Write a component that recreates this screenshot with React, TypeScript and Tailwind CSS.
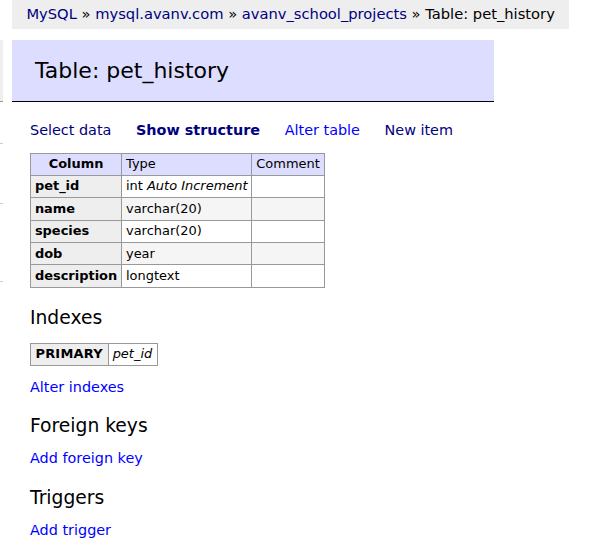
import React from "react";

const rows: { name: string; type: React.ReactNode }[] = [
  { name: "pet_id", type: <>int <i>Auto Increment</i></> },
  { name: "name", type: "varchar(20)" },
  { name: "species", type: "varchar(20)" },
  { name: "dob", type: "year" },
  { name: "description", type: "longtext" },
];

export default function App() {
  return (
    <div
      className="relative w-[598px] h-[559px] overflow-hidden bg-white text-black text-[14.4px] leading-[1.25]"
      style={{ fontFamily: '"DejaVu Sans", Verdana, sans-serif' }}
    >
      {/* hidden menu remnants on the left edge */}
      <div className="absolute left-0 top-[40px] w-[3px] h-[62px] bg-[#eee] border-b border-[#999]" />
      <div className="absolute left-0 top-[143px] w-[3px] h-px bg-[#ccc]" />
      <div className="absolute left-0 top-[203px] w-[3px] h-px bg-[#ccc]" />
      <div className="absolute left-0 top-[281px] w-[3px] h-px bg-[#ccc]" />

      {/* breadcrumb */}
      <div className="ml-[12px] w-fit h-[29px] leading-[28px] px-[14.4px] bg-[#eee] whitespace-nowrap text-[14.7px]">
        <a className="text-[#000080]">MySQL</a> » <a className="text-[#000080]">mysql.avanv.com</a> »{" "}
        <a className="text-[#000080]">avanv_school_projects</a> » Table: pet_history
      </div>

      {/* content */}
      <div className="pl-[30px] pt-[11px]">
        <h2 className="w-[482px] ml-[-18px] mb-[19px] pl-[23px] pr-[21.6px] pt-[17px] pb-[16px] text-[22px] leading-[1.25] font-normal bg-[#ddf] border-b border-black">
          Table: pet_history
        </h2>

        <p className="whitespace-nowrap">
          <a className="text-[#000080] mr-[20px]">Select data</a>{" "}
          <a className="text-[#000080] mr-[20px] font-bold">Show structure</a>{" "}
          <a className="text-[#0000ff] mr-[20px]">Alter table</a>{" "}
          <a className="text-[#000080] mr-[20px]">New item</a>
        </p>

        <table className="mt-[14px] border-collapse text-[12.96px] leading-[1.25]">
          <thead>
            <tr className="bg-[#ddf]">
              <th className="border border-[#999] px-[6.5px] py-[2.6px] text-center font-bold">Column</th>
              <td className="border border-[#999] px-[3.9px] py-[2.6px]">Type</td>
              <td className="border border-[#999] px-[3.9px] py-[2.6px]">Comment</td>
            </tr>
          </thead>
          <tbody>
            {rows.map((r, i) => (
              <tr key={r.name} className={i % 2 === 1 ? "bg-[#f5f5f5]" : "bg-white"}>
                <th className="border border-[#999] px-[3.9px] py-[2.6px] text-left font-bold bg-[#eee]">{r.name}</th>
                <td className="border border-[#999] px-[3.9px] py-[2.6px] whitespace-nowrap">{r.type}</td>
                <td className="border border-[#999] px-[3.9px] py-[2.6px]"></td>
              </tr>
            ))}
          </tbody>
        </table>

        <h3 className="mt-[18.72px] text-[18.72px] leading-[1.25] font-normal">Indexes</h3>
        <table className="mt-[13px] border-collapse text-[12.96px] leading-[1.25]">
          <tbody>
            <tr>
              <th className="border border-[#999] pl-[4.5px] pr-[5px] py-[2.6px] text-left font-bold bg-[#eee] tracking-[0.2px]">PRIMARY</th>
              <td className="border border-[#999] px-[3.9px] pr-[5px] py-[2.6px]">
                <i>pet_id</i>
              </td>
            </tr>
          </tbody>
        </table>
        <p className="mt-[11.5px]">
          <a className="text-[#0000ff]">Alter indexes</a>
        </p>

        <h3 className="mt-[18.72px] text-[18.72px] leading-[1.25] font-normal">Foreign keys</h3>
        <p className="mt-[11.5px]">
          <a className="text-[#0000ff]">Add foreign key</a>
        </p>

        <h3 className="mt-[18.72px] text-[18.72px] leading-[1.25] font-normal">Triggers</h3>
        <p className="mt-[11.5px]">
          <a className="text-[#0000ff]">Add trigger</a>
        </p>
      </div>
    </div>
  );
}
